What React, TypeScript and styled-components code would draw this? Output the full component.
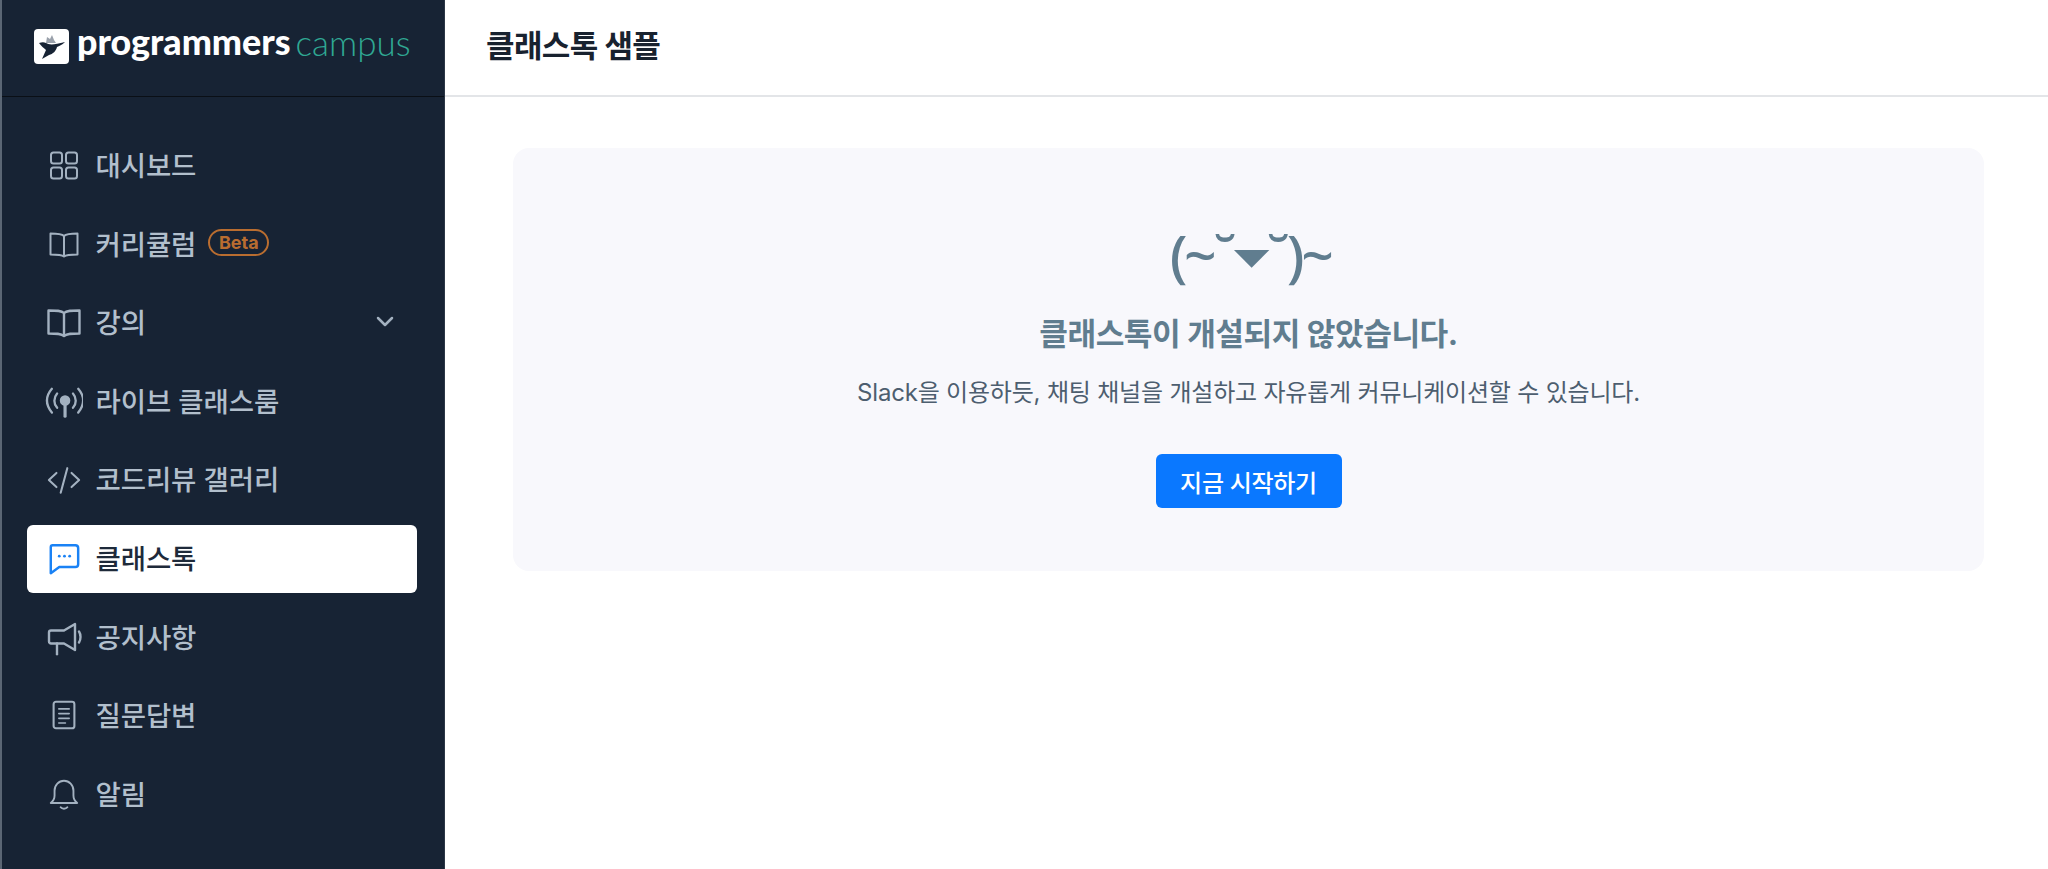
import React from "react";
import styled, { createGlobalStyle } from "styled-components";

const Global = createGlobalStyle`
  html, body { margin: 0; padding: 0; height: 100%; background: #fff; overflow: hidden; }
  #root { height: 100%; }
  * { box-sizing: border-box; }
  body { font-family: Inter, "Noto Sans CJK KR", sans-serif; }
`;

const Page = styled.div`
  display: flex;
  height: 869px;
  width: 2048px;
`;

const Sidebar = styled.aside`
  width: 445px;
  flex: none;
  background: #172334;
  border-left: 2px solid #5b6674;
  border-right: 1px solid #2c3746;
  display: flex;
  flex-direction: column;
`;

const Brand = styled.div`
  height: 97px;
  flex: none;
  border-bottom: 1px solid #0a0f16;
  display: flex;
  align-items: flex-start;
  padding: 29px 0 0 32px;
`;

const LogoMark = styled.div`
  width: 35px;
  height: 35px;
  border-radius: 4px;
  background: #fff;
  display: flex;
  align-items: center;
  justify-content: center;
  flex: none;
`;

const LogoWord = styled.span`
  font-family: Lato, sans-serif;
  font-weight: 900;
  font-size: 35.8px;
  line-height: 26px;
  color: #fff;
  margin-left: 8px;
`;

const LogoCampus = styled.span`
  font-family: Lato, sans-serif;
  font-weight: 300;
  font-size: 35px;
  line-height: 26px;
  color: #2fa893;
  margin-left: 5px;
`;

const Nav = styled.nav`
  display: flex;
  flex-direction: column;
  gap: 10.6px;
  padding: 34.6px 27px 0 25px;
`;

const Item = styled.div<{ $active?: boolean }>`
  height: 68px;
  border-radius: 6px;
  display: flex;
  align-items: center;
  padding: 0 20px 3px 17px;
  background: ${(p) => (p.$active ? "#fff" : "transparent")};
  color: ${(p) => (p.$active ? "#1e2a3a" : "#b2bfcc")};
  font-size: 27.5px;
  font-weight: 500;
`;

const IconSlot = styled.span`
  width: 44px;
  height: 44px;
  flex: none;
  margin-left: -2px;
  margin-right: 9.5px;
  display: flex;
  align-items: center;
  justify-content: center;
  transform: translateY(1.5px);
`;

const Label = styled.span`
  letter-spacing: -0.1px;
`;

const Badge = styled.span`
  margin-left: 12px;
  border: 2px solid #b96d30;
  color: #b96d30;
  border-radius: 14px;
  height: 27px;
  width: 61px;
  font-size: 18px;
  font-weight: 700;
  display: flex;
  align-items: center;
  justify-content: center;
`;

const Chevron = styled.span`
  margin-left: auto;
  display: flex;
  align-items: center;
`;

const Main = styled.main`
  flex: 1;
  min-width: 0;
  display: flex;
  flex-direction: column;
`;

const Header = styled.header`
  height: 97px;
  flex: none;
  border-bottom: 2px solid #e3e5e8;
  display: flex;
  align-items: center;
  padding: 0 0 8px 41px;
`;

const Title = styled.h1`
  margin: 0;
  font-size: 31px;
  font-weight: 700;
  color: #18222f;
  letter-spacing: -0.6px;
`;

const Content = styled.div`
  padding: 51px 64px 0 68px;
`;

const Card = styled.section`
  height: 423px;
  border-radius: 16px;
  background: #f8f8fc;
  display: flex;
  flex-direction: column;
  align-items: center;
  padding-top: 72px;
`;

const Face = styled.div`
  font-size: 57px;
  line-height: 68px;
  font-weight: 500;
  letter-spacing: -3.4px;
  color: #607d8f;
  font-family: "Noto Sans", "DejaVu Sans", sans-serif;
  white-space: nowrap;
  margin-left: 3px;
`;

const Nose = styled.span`
  display: inline-block;
  transform: scale(1.25, 0.62);
  margin: 0 4px;
`;

const Heading = styled.h2`
  margin: 26px 0 0;
  font-size: 31.2px;
  line-height: 40px;
  font-weight: 700;
  color: #607d8f;
  letter-spacing: -0.5px;
`;

const Description = styled.p`
  margin: 20px 0 0;
  font-size: 24px;
  line-height: 38px;
  font-weight: 400;
  color: #4d5e6f;
  letter-spacing: -0.2px;
`;

const Button = styled.button`
  margin-top: 42px;
  width: 186px;
  height: 54px;
  border: 0;
  border-radius: 6px;
  background: #0a78ff;
  color: #fff;
  font-family: inherit;
  font-size: 24px;
  font-weight: 500;
  letter-spacing: -0.3px;
`;

const Svg: React.FC<{ c?: string; children: React.ReactNode; size?: number }> = ({ c = "#a3b1c0", children, size = 36 }) => (
  <svg width={size} height={size} viewBox="0 0 36 36" fill="none" stroke={c} strokeWidth={2} strokeLinecap="round" strokeLinejoin="round">
    {children}
  </svg>
);

const GridIcon = () => (
  <Svg>
    <rect x="5" y="5" width="11" height="11" rx="2.5" />
    <rect x="20" y="5" width="11" height="11" rx="2.5" />
    <rect x="5" y="20" width="11" height="11" rx="2.5" />
    <rect x="20" y="20" width="11" height="11" rx="2.5" />
  </Svg>
);
const BookThin = () => (
  <Svg>
    <path d="M18 9.5C15.5 7 11 7 4.5 7v21c6.5 0 11 0 13.5 2 2.5-2 7-2 13.5-2V7C25 7 20.5 7 18 9.5z" />
    <path d="M18 9.5V29" />
  </Svg>
);
const BookBold = () => (
  <Svg>
    <path d="M18 8.5C15.5 6 10 6 2.5 6v23c7.5 0 12.5 0 15.5 2.5C21 29 26 29 33.5 29V6C26 6 20.5 6 18 8.5z" strokeWidth={2.4} />
    <path d="M18 8.5V31" strokeWidth={2.4} />
  </Svg>
);
const RadioIcon = () => (
  <Svg size={38}>
    <circle cx="19" cy="17" r="4" fill="#a3b1c0" />
    <path d="M19 20v12" strokeWidth={3} />
    <path d="M11.5 10.5c-3.5 4-3.5 9.5 0 13.5M26.5 10.5c3.5 4 3.5 9.5 0 13.5" strokeWidth={2.2} />
    <path d="M6.5 6c-6 7-6 15 0 22.5M31.5 6c6 7 6 15 0 22.5" strokeWidth={2.2} />
  </Svg>
);
const CodeIcon = () => (
  <Svg size={34}>
    <path d="M10 11l-8 7.5 8 7.5M26 11l8 7.5-8 7.5M21.5 6l-7 26" strokeWidth={2.2} />
  </Svg>
);
const ChatIcon = () => (
  <Svg c="#1a82f5" size={34}>
    <path d="M6 4h24a3 3 0 0 1 3 3v17a3 3 0 0 1-3 3H13l-9 6.5V6a2 2 0 0 1 2-2z" strokeWidth={2.6} />
    <circle cx="13" cy="15.5" r="1.5" fill="#1a82f5" stroke="none" />
    <circle cx="18.5" cy="15.5" r="1.5" fill="#1a82f5" stroke="none" />
    <circle cx="24" cy="15.5" r="1.5" fill="#1a82f5" stroke="none" />
  </Svg>
);
const MegaIcon = () => (
  <Svg size={36}>
    <path d="M3 13a2 2 0 0 1 2-2h13l11-6.5v26L18 24H5a2 2 0 0 1-2-2z" strokeWidth={2.4} />
    <path d="M11 24v11" strokeWidth={2.4} />
    <path d="M33 12c2 3 2 8 0 11" strokeWidth={2.4} />
  </Svg>
);
const DocIcon = () => (
  <Svg size={34}>
    <rect x="7" y="3.5" width="22" height="28" rx="2.5" strokeWidth={2.2} />
    <path d="M12.5 11h11M12.5 16h11M12.5 21h11M12.5 26h7" strokeWidth={1.7} />
  </Svg>
);
const BellIcon = () => (
  <Svg size={34}>
    <path d="M4 27c2.5-2 4-3.5 4-8v-5C8 8 12.5 3.5 18 3.5S28 8 28 14v5c0 4.5 1.5 6 4 8z" strokeWidth={2} />
    <path d="M14.5 31.5c1.5 2 5.5 2 7 0" strokeWidth={2.2} />
  </Svg>
);

const items = [
  { label: "대시보드", icon: <GridIcon /> },
  { label: "커리큘럼", icon: <BookThin />, badge: "Beta" },
  { label: "강의", icon: <BookBold />, chevron: true },
  { label: "라이브 클래스룸", icon: <RadioIcon /> },
  { label: "코드리뷰 갤러리", icon: <CodeIcon /> },
  { label: "클래스톡", icon: <ChatIcon />, active: true },
  { label: "공지사항", icon: <MegaIcon /> },
  { label: "질문답변", icon: <DocIcon /> },
  { label: "알림", icon: <BellIcon /> },
];

export default function App() {
  return (
    <Page>
      <Global />
      <Sidebar>
        <Brand>
          <LogoMark>
            <svg width="32" height="32" viewBox="0 0 32 32">
              <path d="M10 12l1-6 3 2 2-4 2 5 2 3z" fill="#9aa1ab" />
              <path d="M3 12c3-1 5-1 7 0 3 2 8 2 19-1-3 3-6 4-8 5-1 4-4 7-8 8l-7 4 4-9c-2-2-5-4-7-7z" fill="#172334" />
            </svg>
          </LogoMark>
          <LogoWord>programmers</LogoWord>
          <LogoCampus>campus</LogoCampus>
        </Brand>
        <Nav>
          {items.map((it) => (
            <Item key={it.label} $active={it.active}>
              <IconSlot>{it.icon}</IconSlot>
              <Label>{it.label}</Label>
              {it.badge && <Badge>{it.badge}</Badge>}
              {it.chevron && (
                <Chevron>
                  <svg width="24" height="24" viewBox="0 0 24 24" fill="none" stroke="#a3b1c0" strokeWidth="2.5" strokeLinecap="round" strokeLinejoin="round">
                    <path d="M5 9l7 7 7-7" />
                  </svg>
                </Chevron>
              )}
            </Item>
          ))}
        </Nav>
      </Sidebar>
      <Main>
        <Header>
          <Title>클래스톡 샘플</Title>
        </Header>
        <Content>
          <Card>
            <Face>(~˘<Nose>▾</Nose>˘)~</Face>
            <Heading>클래스톡이 개설되지 않았습니다.</Heading>
            <Description>Slack을 이용하듯, 채팅 채널을 개설하고 자유롭게 커뮤니케이션할 수 있습니다.</Description>
            <Button>지금 시작하기</Button>
          </Card>
        </Content>
      </Main>
    </Page>
  );
}
